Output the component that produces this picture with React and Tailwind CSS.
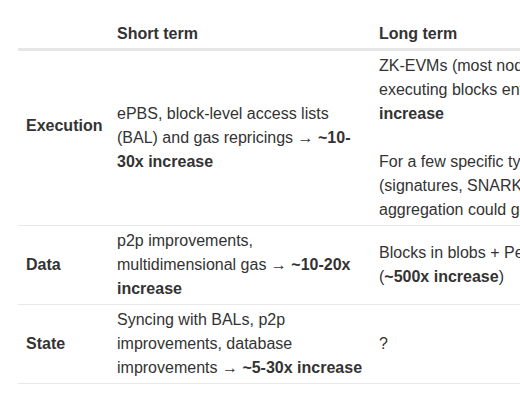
import React from 'react'

const rows = [
  {
    label: 'Execution',
    labelPad: 'pb-[27px]',
    short: (
      <>
        ePBS, block-level access lists (BAL) and gas repricings → <b>~10-30x increase</b>
      </>
    ),
    long: (
      <>
        ZK-EVMs (most nodes verifying proofs instead of
        <br />
        executing blocks entirely) → <b>~1000x</b>
        <br />
        <b>increase</b>
        <br />
        <br />
        For a few specific types of computation
        <br />
        (signatures, SNARK/STARK verification),
        <br />
        aggregation could give much more
      </>
    ),
  },
  {
    label: 'Data',
    short: (
      <>
        p2p improvements, multidimensional gas → <b>~10-20x increase</b>
      </>
    ),
    long: (
      <>
        Blocks in blobs + PeerDAS
        <br />(<b>~500x increase</b>)
      </>
    ),
  },
  {
    label: 'State',
    short: (
      <>
        Syncing with BALs, p2p improvements, database improvements → <b>~5-30x increase</b>
      </>
    ),
    long: '?',
  },
]

export default function App() {
  return (
    <div className="h-[400px] w-[520px] overflow-hidden bg-white pl-[18px] pt-[18px] font-['Liberation_Sans',Arial,sans-serif] text-[16px] leading-[24px] text-[#333]">
      <table className="w-[720px] table-fixed border-collapse text-left">
        <colgroup>
          <col className="w-[91px]" />
          <col className="w-[262px]" />
          <col className="w-[367px]" />
        </colgroup>
        <thead>
          <tr className="border-b-[3px] border-[#e6e6e6]">
            <th className="px-2 pb-[2px] pt-[4px]"></th>
            <th className="px-2 pb-[2px] pt-[4px] font-bold">Short term</th>
            <th className="px-2 pb-[2px] pt-[4px] font-bold">Long term</th>
          </tr>
        </thead>
        <tbody>
          {rows.map((r) => (
            <tr key={r.label} className="border-b border-[#e8e8e8]">
              <td className={['px-2 py-[3px] align-middle font-bold', r.labelPad || ''].join(' ')}>
                {r.label}
              </td>
              <td className="px-2 py-[3px] align-middle">{r.short}</td>
              <td className="whitespace-nowrap px-2 py-[3px] align-middle">{r.long}</td>
            </tr>
          ))}
        </tbody>
      </table>
    </div>
  )
}
